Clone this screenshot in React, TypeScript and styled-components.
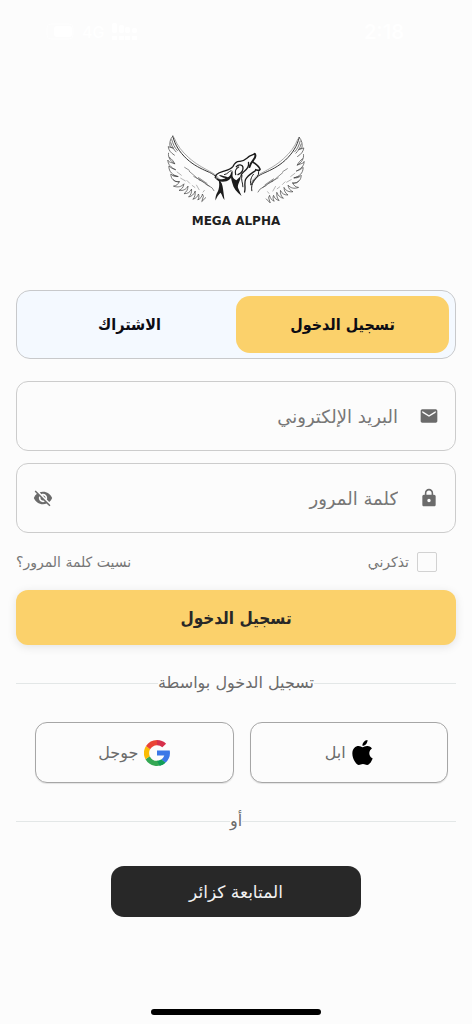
import React, { useState } from 'react';
import styled, { createGlobalStyle, css } from 'styled-components';
import { MdEmail, MdLock, MdVisibilityOff } from 'react-icons/md';

const GlobalStyle = createGlobalStyle`
  *, *::before, *::after { box-sizing: border-box; }
  body {
    margin: 0;
    background: #fcfcfc;
    color: #6b6b6b;
    font-family: 'DejaVu Sans', sans-serif;
  }
  button, input { font-family: inherit; }
`;

const boldFace = css`
  font-family: 'DejaVu Sans Condensed', 'DejaVu Sans', sans-serif;
  font-weight: 700;
`;

const Screen = styled.div`
  min-height: 100vh;
  display: flex;
  flex-direction: column;
`;

const StatusBar = styled.header`
  display: flex;
  align-items: center;
  justify-content: space-between;
  height: 64px;
  padding: 0 68px 0 44px;
  color: #ffffff;
  font: 600 20px/24px Inter, sans-serif;
`;

const StatusGroup = styled.div`
  display: flex;
  align-items: center;
  gap: 8px;
  font-size: 16px;
  font-weight: 500;
`;

const Brand = styled.div`
  display: flex;
  flex-direction: column;
  align-items: center;
  padding: 61px 0 60px;
`;

const BrandMark = styled.svg`
  display: block;
  width: 160px;
  height: 88px;
`;

const BrandName = styled.div`
  color: #1f1f1f;
  font: 700 12px/17px 'DejaVu Sans', sans-serif;
`;

const Form = styled.form`
  display: flex;
  flex-direction: column;
  padding: 0 16px;
`;

const Tabs = styled.div`
  display: flex;
  height: 69px;
  margin-bottom: 22px;
  padding: 5px 6px;
  background: #f4f9ff;
  border: 1px solid #c8c9cb;
  border-radius: 14px;
`;

const Tab = styled.button<{ $active: boolean }>`
  flex: 1;
  padding: 0;
  border: 0;
  border-radius: 14px;
  background: ${({ $active }) => ($active ? '#fbd16b' : 'transparent')};
  color: #0c0c14;
  && { ${boldFace} }
  font-size: 16px;
`;

const Field = styled.label`
  display: flex;
  align-items: center;
  height: 70px;
  margin-bottom: 12px;
  padding: 0 16px;
  border: 1px solid #cccccc;
  border-radius: 12px;
  color: #6b6b6b;
`;

const FieldInput = styled.input`
  flex: 1;
  min-width: 0;
  height: 40px;
  margin: 0 21px;
  padding: 0;
  border: 0;
  outline: 0;
  background: transparent;
  color: #333333;
  font-size: 18px;
  &::placeholder { color: #777777; opacity: 1; }
`;

const IconButton = styled.button`
  display: flex;
  padding: 0;
  border: 0;
  background: transparent;
  color: inherit;
`;

const Options = styled.div`
  display: flex;
  align-items: center;
  justify-content: space-between;
  height: 20px;
  margin: 7px 0 18px;
  color: #777777;
  font-size: 14px;
`;

const Remember = styled.label`
  display: flex;
  align-items: center;
  gap: 8px;
  padding-right: 19px;
`;

const Checkbox = styled.input`
  appearance: none;
  width: 20px;
  height: 20px;
  margin: 0;
  border: 1px solid #d2d2d2;
  border-radius: 2px;
  &:checked { background: #fbd16b; }
`;

const Link = styled.a`
  color: inherit;
  text-decoration: none;
`;

const Submit = styled.button`
  height: 55px;
  padding: 0;
  border: 0;
  border-radius: 12px;
  background: #fbd16b;
  box-shadow: 0 2px 10px rgba(0, 0, 0, 0.1);
  color: #272727;
  && { ${boldFace} }
  font-size: 17px;
`;

const Divider = styled.div`
  display: flex;
  align-items: center;
  font-size: 16px;
  line-height: 24px;
  &::before, &::after {
    content: '';
    flex: 1;
    height: 1px;
    background: #e3e7e7;
  }
`;

const SocialDivider = styled(Divider)`
  margin: 26px 0 27px;
`;

const OrDivider = styled(Divider)`
  margin: 26px 0 33px;
`;

const Social = styled.div`
  display: flex;
  gap: 16px;
  padding: 0 8px 0 19px;
`;

const pill = css`
  display: flex;
  align-items: center;
  justify-content: center;
  padding: 0;
`;

const SocialButton = styled.button`
  ${pill}
  flex: 1;
  gap: 6px;
  height: 61px;
  border: 1px solid #a6a6a6;
  border-radius: 12px;
  background: #fcfcfc;
  box-shadow: 0 1px 1px rgba(0, 0, 0, 0.1);
  color: #6b6b6b;
  font-size: 16px;
`;

const GuestButton = styled.button`
  ${pill}
  align-self: center;
  width: 57%;
  height: 51px;
  border: 0;
  border-radius: 13px;
  background: #282828;
  color: #f2f2f2;
  font-size: 17px;
`;

const HomeIndicator = styled.div`
  width: 36%;
  height: 6px;
  margin: auto auto 9px;
  border-radius: 3px;
  background: #000000;
`;

const StatusIcons = () => (
  <StatusGroup>
    <svg width="30" height="18" viewBox="0 0 30 18" fill="#fff">
      <rect x="3" y="1" width="26" height="15" rx="4" fill="none" stroke="#fff" strokeOpacity=".5" />
      <rect x="10" y="3" width="18" height="11" rx="3" />
    </svg>
    <span>4G</span>
    <svg width="26" height="18" viewBox="0 0 26 18" fill="#fff">
      <rect x="0" y="0" width="5" height="10" rx="2" />
      <rect x="7" y="2" width="5" height="8" rx="2" />
      <rect x="13" y="4" width="5" height="6" rx="2" />
      <rect x="20" y="5" width="5" height="5" rx="2" />
      <path d="M0 13h5v4H0zM7 13h5v4H7zM13 13h5v4h-5zM20 13h5v4h-5z" />
    </svg>
  </StatusGroup>
);

const Wing = () => (
  <g fill="none" stroke="#444" strokeWidth="2.2" strokeLinecap="round" strokeLinejoin="round">
    <path d="M48 32C54 58 68 80 90 101C112 121 134 131 152 139C172 147 188 159 194 176" stroke="#333" strokeWidth="3" />
    <path d="M52 37C62 62 76 79 96 97C118 117 138 127 158 138C174 146 186 155 192 166" stroke="#888" />
    <path d="M48 32C40 40 37 54 40 65L51 69C44 67 38 66 34 64C36 76 42 83 53 90" />
    <path d="M45 43C49 57 53 67 62 76M42 52C45 64 51 73 58 80" stroke="#777" strokeWidth="3" />
    <path d="M35 84C33 96 40 108 54 116L42 112C35 110 34 107 33 105C33 118 42 127 56 134" />
    <path d="M54 116C50 108 45 102 38 97M56 134C48 132 42 128 36 123C36 141 48 151 64 155L50 151" />
    <path d="M64 155C52 156 46 152 42 147C42 163 53 171 68 171L56 170L50 165" />
    <path d="M68 170C64 180 58 183 50 184C64 189 74 186 82 177C80 188 76 193 67 197C79 199 88 194 94 185" />
    <path d="M94 185C94 195 90 201 82 207C94 207 100 203 105 193C106 203 103 211 96 217C106 215 112 209 116 200" />
    <path d="M116 200C117 210 115 217 109 224C119 221 123 216 126 208C129 215 127 220 124 226C133 221 137 216 138 208L141 215L136 231L148 219" />
    <path d="M84 127L98 136M98 139L119 157M112 155L132 165M120 159L144 174M126 158L152 176" stroke="#666" />
    <path d="M128 165C139 167 145 176 159 184M148 178L167 189L173 198" stroke="#555" />
    <path d="M61 141L74 151M72 160L86 168M91 167L99 175M107 182L115 188M120 181L128 195M144 197L140 202" stroke="#999" />
  </g>
);

const WolfHead = () => (
  <g transform="translate(150 60)" fill="#1c1c1c">
    <g fill="none" stroke="#1c1c1c" strokeLinecap="round" strokeLinejoin="round">
      <path d="M27 98C27 88 38 83 49 80C63 76 74 74 81 64C87 52 93 48 102 49C116 48 122 39 131 33L147 26" strokeWidth="4" />
      <path d="M147 26C152 32 148 38 143 44C138 50 133 57 131 66" strokeWidth="6" />
      <path d="M141 50C149 57 160 63 163 73C160 79 156 76 150 74" strokeWidth="5" />
      <path d="M159 80C160 94 151 99 145 108C138 118 136 126 138 138" strokeWidth="3" />
      <path d="M149 77C138 85 125 92 119 104C114 116 120 128 116 142" strokeWidth="4" />
      <path d="M143 88C136 97 132 107 135 120M108 92C104 104 111 114 111 126" strokeWidth="3" />
      <path d="M128 52C130 63 124 73 113 81C109 84 106 87 105 94" strokeWidth="4" />
      <path d="M91 65C97 57 109 58 111 66C113 76 104 85 96 89M98 66C90 70 86 80 89 89" strokeWidth="4" />
      <path d="M55 89C66 87 67 79 75 77" strokeWidth="3" />
    </g>
    <path d="M25 96C33 104 48 106 58 99C50 99 43 95 38 90C47 91 57 94 65 97C75 92 73 85 78 77C83 90 75 104 61 109C46 113 30 109 25 96Z" />
    <path d="M36 104C47 111 50 123 51 136L55 166C48 158 48 150 43 144C37 150 31 157 28 168C26 152 34 144 37 134C40 124 40 112 36 104Z" />
    <path d="M80 76C76 90 80 102 91 106L104 94C104 110 94 116 96 129L107 154C92 141 82 130 79 115C75 102 72 91 80 76Z" />
  </g>
);

const Logo = () => (
  <BrandMark viewBox="-3 0 486 264" role="img" aria-label="Mega Alpha">
    <Wing />
    <g transform="matrix(-1 0 0 1 480 4)"><Wing /></g>
    <WolfHead />
  </BrandMark>
);

const GoogleLogo = () => (
  <svg width="26" height="26" viewBox="0 0 48 48" aria-hidden="true">
    <path fill="#3b78e7" d="M24 19.500h23.500a24 24 0 0 1-8 22.400l-7.700-6a14.500 14.500 0 0 0 5.700-7.400H24z" />
    <path fill="#34a853" d="M2.700 35.400l7.900-5.600C13 35.400 18.100 38.500 24 38.500c3 0 5.700-.9 7.800-2.600l7.700 6A24 24 0 0 1 2.700 35.400z" />
    <path fill="#109d58" d="M24 38.500c3 0 5.700-.9 7.800-2.600l7.700 6A24 24 0 0 1 29 47.500z" />
    <path fill="#fbbc04" d="M2.700 35.400a24 24 0 0 1 1-24.200l7.600 6a14.500 14.500 0 0 0-.7 12.600z" />
    <path fill="#ea4335" d="M3.700 11.200A24 24 0 0 1 24 0v9.500c-5.500 0-10.200 3-12.700 7.700z" />
    <path fill="#d6304b" d="M24 0c6.600 0 12.400 2.500 16.800 6.700l-6.900 6.900A14.500 14.500 0 0 0 24 9.500z" />
  </svg>
);

const AppleLogo = () => (
  <svg width="21" height="25" viewBox="0 0 814 1000" aria-hidden="true">
    <path d="M788 341c-6 4-108 62-108 190 0 149 130 201 134 203-1 3-21 71-69 141-43 61-87 123-155 123s-85-40-164-40c-76 0-103 41-165 41s-106-57-155-126C48 791 0 663 0 541c0-195 126-298 251-298 66 0 121 43 163 43 39 0 101-46 176-46 29 0 131 3 198 101zM554 159c31-37 53-88 53-139 0-7-1-14-2-20-50 2-110 34-147 76-28 32-55 83-55 135 0 8 1 16 2 18 3 1 8 2 14 2 45 0 102-30 135-72z" />
  </svg>
);

export default function App() {
  const [mode, setMode] = useState<'login' | 'register'>('login');
  const [showPassword, setShowPassword] = useState(false);

  return (
    <>
      <GlobalStyle />
      <Screen lang="ar" dir="ltr">
        <StatusBar>
          <StatusIcons />
          <span>2:18</span>
        </StatusBar>
        <Brand>
          <Logo />
          <BrandName>MEGA ALPHA</BrandName>
        </Brand>
        <Form dir="rtl" onSubmit={(event) => event.preventDefault()}>
          <Tabs>
            <Tab type="button" $active={mode === 'login'} onClick={() => setMode('login')}>تسجيل الدخول</Tab>
            <Tab type="button" $active={mode === 'register'} onClick={() => setMode('register')}>الاشتراك</Tab>
          </Tabs>
          <Field>
            <MdEmail size={20} />
            <FieldInput type="email" dir="rtl" placeholder="البريد الإلكتروني" aria-label="البريد الإلكتروني" />
          </Field>
          <Field>
            <MdLock size={20} />
            <FieldInput type={showPassword ? 'text' : 'password'} placeholder="كلمة المرور" aria-label="كلمة المرور" />
            <IconButton type="button" aria-label="إظهار كلمة المرور" onClick={() => setShowPassword(!showPassword)}>
              <MdVisibilityOff size={20} />
            </IconButton>
          </Field>
          <Options>
            <Remember><Checkbox type="checkbox" />تذكرني</Remember>
            <Link href="#forgot">نسيت كلمة المرور؟</Link>
          </Options>
          <Submit type="submit">تسجيل الدخول</Submit>
          <SocialDivider>تسجيل الدخول بواسطة</SocialDivider>
          <Social>
            <SocialButton type="button"><AppleLogo />ابل</SocialButton>
            <SocialButton type="button"><GoogleLogo />جوجل</SocialButton>
          </Social>
          <OrDivider>أو</OrDivider>
          <GuestButton type="button">المتابعة كزائر</GuestButton>
        </Form>
        <HomeIndicator />
      </Screen>
    </>
  );
}
